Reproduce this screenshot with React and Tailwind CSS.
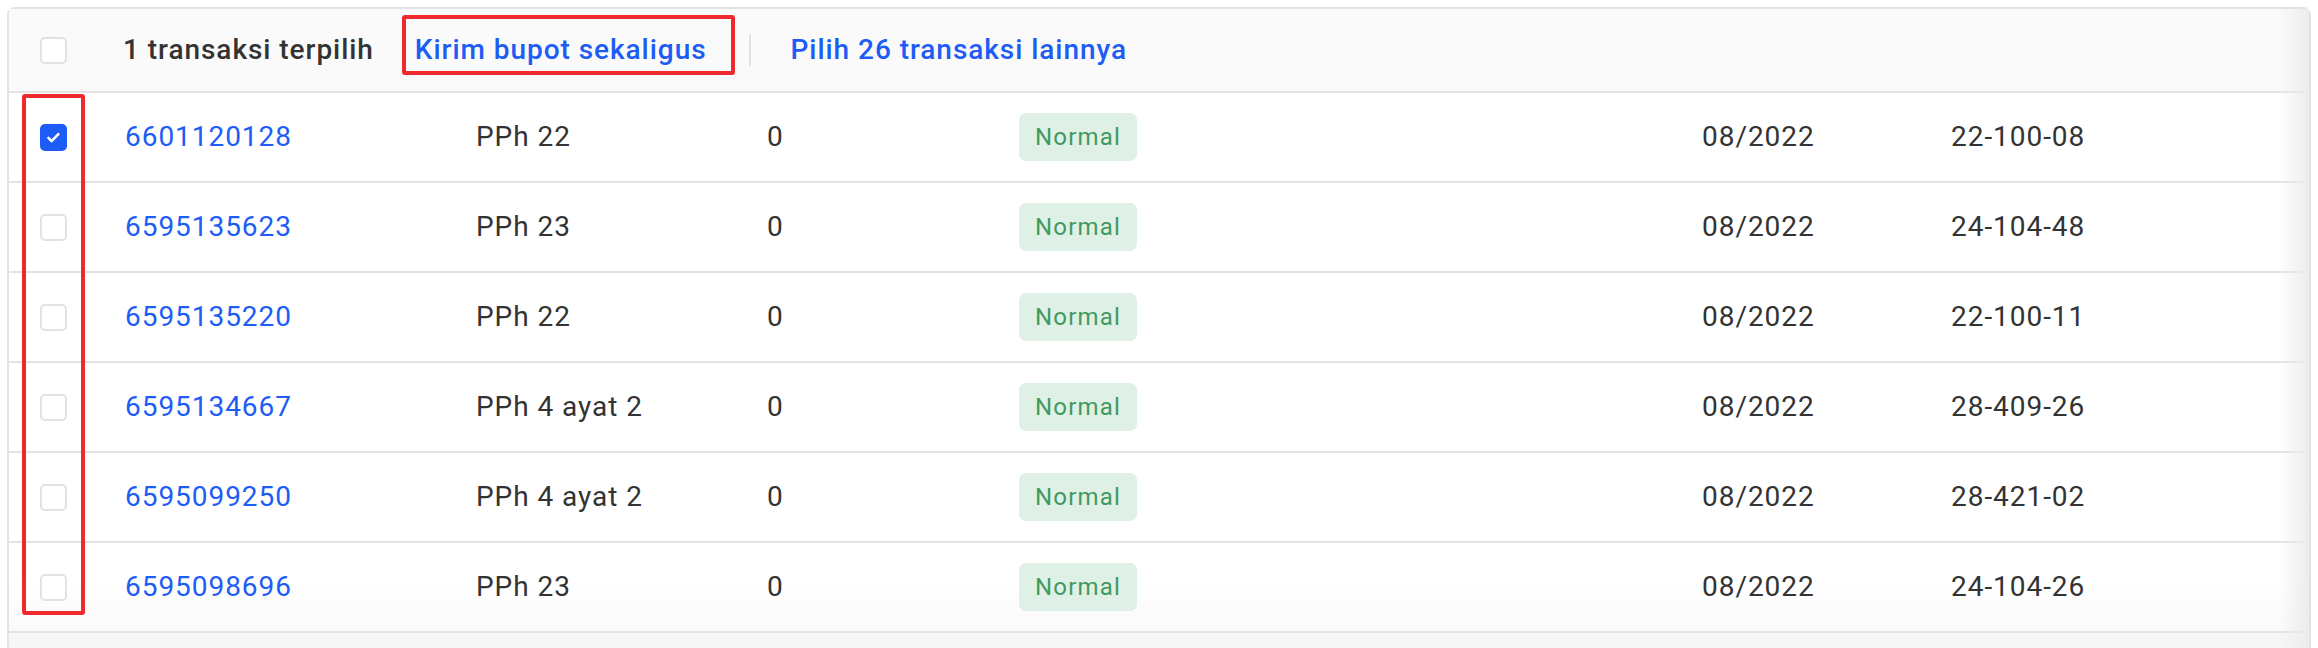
import React from 'react';

const ROWS = [
  { id: '6601120128', type: 'PPh 22', val: '0', period: '08/2022', code: '22-100-08', checked: true },
  { id: '6595135623', type: 'PPh 23', val: '0', period: '08/2022', code: '24-104-48' },
  { id: '6595135220', type: 'PPh 22', val: '0', period: '08/2022', code: '22-100-11' },
  { id: '6595134667', type: 'PPh 4 ayat 2', val: '0', period: '08/2022', code: '28-409-26' },
  { id: '6595099250', type: 'PPh 4 ayat 2', val: '0', period: '08/2022', code: '28-421-02' },
  { id: '6595098696', type: 'PPh 23', val: '0', period: '08/2022', code: '24-104-26' },
];

function Checkbox({ checked }) {
  if (checked) {
    return (
      <span className="flex h-[27px] w-[27px] items-center justify-center rounded-[5px] bg-[#1d5cf5]">
        <svg width="17" height="17" viewBox="0 0 16 16" fill="none">
          <path d="M3.2 8.4l3 3 6.4-6.6" stroke="white" strokeWidth="2.4" strokeLinecap="round" strokeLinejoin="round" />
        </svg>
      </span>
    );
  }
  return <span className="block h-[27px] w-[27px] rounded-[5px] border-2 border-[#e2e2e2] bg-white" />;
}

export default function App() {
  return (
    <div className="h-[648px] w-[2318px] overflow-hidden bg-white pl-[7px] pr-[7px] pt-[7px] font-['Roboto',sans-serif] text-[28px] leading-[42px] tracking-[0.034em] text-[#333]">
      <div className="relative rounded-t-[8px] border-x-2 border-t-2 border-[#e3e3e3]">
        {/* header / bulk actions */}
        <div className="flex h-[84px] items-center border-b-2 border-[#e3e3e3] bg-[#fafafa] font-medium">
          <div className="w-[114px] pl-[31px]">
            <Checkbox />
          </div>
          <span>1 transaksi terpilih</span>
          <span className="relative ml-[41px] text-[#1d5cf5]">
            Kirim bupot sekaligus
            <span className="absolute -left-[13px] -right-[28px] -top-[14px] -bottom-[4px] rounded-[3px] border-4 border-[#ee2a2f]" />
          </span>
          <span className="ml-[42px] h-[32px] w-[2px] bg-[#e3e3e3]" />
          <span className="ml-[40px] text-[#1d5cf5]">Pilih 26 transaksi lainnya</span>
        </div>

        {/* rows */}
        {ROWS.map((r, i) => (
          <div
            key={r.id}
            className={`flex h-[90px] items-center border-b-2 border-[#e3e3e3] ${
              i === ROWS.length - 1 ? 'bg-gradient-to-b from-white from-40% to-[#fafafa]' : 'bg-white'
            }`}
          >
            <div className="w-[116px] pl-[31px]">
              <Checkbox checked={r.checked} />
            </div>
            <div className="w-[351px] text-[#1d5cf5]">{r.id}</div>
            <div className="w-[291px]">{r.type}</div>
            <div className="w-[252px]">{r.val}</div>
            <div className="w-[683px]">
              <span className="inline-flex h-[48px] items-center rounded-[7px] bg-[#dff0e6] px-[16px] text-[24px] tracking-[0.05em] text-[#3f9a5f]">
                Normal
              </span>
            </div>
            <div className="w-[249px]">{r.period}</div>
            <div>{r.code}</div>
          </div>
        ))}

        <div className="h-[20px] bg-[#f6f6f6]" />

        {/* annotation around row checkboxes */}
        <span className="absolute left-[13px] top-[85px] h-[521px] w-[63px] rounded-[3px] border-4 border-[#ee2a2f]" />

        {/* horizontal scroll shadow */}
        <span className="pointer-events-none absolute right-0 top-0 bottom-0 w-[30px] bg-gradient-to-r from-transparent to-[#ececec]" />
      </div>
    </div>
  );
}
